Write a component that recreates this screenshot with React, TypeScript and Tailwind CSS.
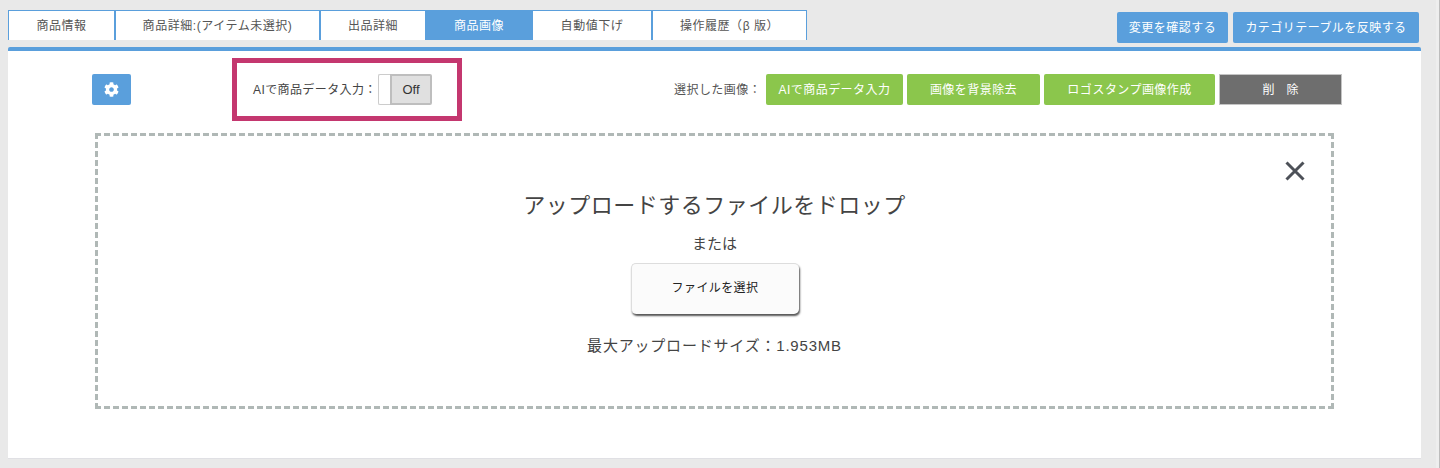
import React from "react";
import { FaCog } from "react-icons/fa";

const tabs = [
  { label: "商品情報", className: "w-[107px] border-x" },
  { label: "商品詳細:(アイテム未選択)", className: "w-[205px] border-x" },
  { label: "出品詳細", className: "w-[105px] border-l" },
  { label: "商品画像", className: "w-[108px] !bg-[#5a9fdc] !text-white" },
  { label: "自動値下げ", className: "w-[119px] border-r" },
  { label: "操作履歴（β 版）", className: "w-[155px] border-x" },
];

const greenButtons = [
  { label: "AIで商品データ入力", width: "w-[137px]" },
  { label: "画像を背景除去", width: "w-[133px]" },
  { label: "ロゴスタンプ画像作成", width: "w-[171px]" },
];

const App: React.FC = () => {
  return (
    <div className="relative h-[468px] w-[1440px] overflow-hidden bg-[#e9e9e9] pl-2 pr-[19px] font-['Liberation_Sans','Noto_Sans_CJK_JP',sans-serif] text-[#444]">
      {/* scrollbar strip on the far right */}
      <div className="absolute top-0 right-0 h-full w-1 border-r border-[#bdbdbd] bg-[#eeeeee]" />

      <div className="flex h-[47px] items-start justify-between">
        <div className="mt-2.5 flex h-[30px]">
          {tabs.map((tab) => (
            <div
              key={tab.label}
              className={`flex items-center justify-center border-t border-[#5a9fdc] bg-white pt-px text-xs tracking-[0.55px] text-[#555] ${tab.className}`}
            >
              {tab.label}
            </div>
          ))}
        </div>
        <div className="mt-3 mr-0.5 flex gap-[5px]">
          <button className="h-[31px] w-[111px] rounded-[2px] bg-[#5a9fdc] text-xs tracking-[0.5px] text-white">変更を確認する</button>
          <button className="h-[31px] w-[186px] rounded-[2px] bg-[#5a9fdc] text-xs tracking-[0.45px] text-white">カテゴリテーブルを反映する</button>
        </div>
      </div>

      <div className="h-[412px] rounded-t-[2px] border-t-4 border-b border-[#5a9fdc] border-b-[#e0e0e4] bg-white pl-[84px]">
        <div className="flex h-[82px] items-start">
          <button className="mt-[23px] flex h-[31px] w-[39px] items-center justify-center rounded-[2px] bg-[#5a9fdc] text-white">
            <FaCog className="text-[15px]" />
          </button>
          <div className="mt-[7px] ml-[101px] flex h-[63px] w-[230px] items-center border-[5px] border-[#c4376f] pl-4">
            <span className="w-[125px] text-xs tracking-[0.4px] text-[#444]">AIで商品データ入力：</span>
            <div className="flex h-[31px] w-[54px] rounded-[2px] bg-white">
              <span className="w-3 rounded-l-[2px] border-y border-l border-[#cccccc]" />
              <span className="flex flex-1 items-center justify-center rounded-r-[2px] border-2 border-[#bebebe] bg-[#e0e0e0] text-[13px] text-[#333]">
                Off
              </span>
            </div>
          </div>
          <div className="mt-[23px] ml-[212px] flex h-[31px] items-center gap-1">
            <span className="mr-[3px] w-[85px] text-xs tracking-[0.45px] whitespace-nowrap text-[#555]">選択した画像：</span>
            {greenButtons.map((b) => (
              <button key={b.label} className={`h-[31px] rounded-[2px] bg-[#8bc64c] text-xs tracking-[0.45px] text-white ${b.width}`}>
                {b.label}
              </button>
            ))}
            <button className="h-[31px] w-[123px] border border-[#c4c4c4] bg-[#6e6e6e] text-xs text-white">削　除</button>
          </div>
        </div>

        <div className="relative ml-[3px] flex h-[276px] w-[1239px] flex-col items-center border-[3px] border-dashed border-[#b0b8b6] pt-[53px]">
          <svg className="absolute top-[25px] right-[26px] h-5 w-5" viewBox="0 0 20 20" fill="none">
            <path d="M1.5 1.5 18.5 18.5M18.5 1.5 1.5 18.5" stroke="#4d5158" strokeWidth="3" />
          </svg>
          <p className="h-[33px] text-[22px] leading-[33px] tracking-[0.5px] text-[#444]">アップロードするファイルをドロップ</p>
          <p className="mt-3 h-5 text-[15px] leading-5 text-[#444]">または</p>
          <button className="mt-[9px] h-[51px] w-[168px] rounded-[5px] border-t border-l border-[#dddddd] bg-[#fbfbfb] pb-0.5 text-xs tracking-[0.4px] text-[#222] shadow-[1px_2px_2px_#555]">
            ファイルを選択
          </button>
          <p className="mt-[22px] h-5 text-[15px] leading-5 tracking-[0.8px] text-[#444]">最大アップロードサイズ：1.953MB</p>
        </div>
      </div>
    </div>
  );
};

export default App;
